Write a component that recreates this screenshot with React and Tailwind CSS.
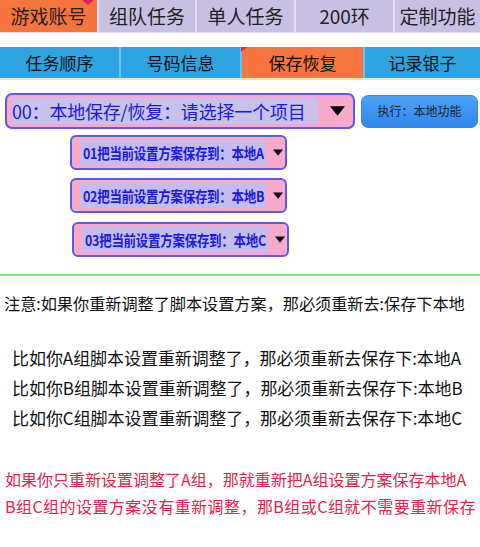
import React from "react";

const cjk = { fontFamily: '"Noto Sans CJK SC", "Noto Sans", sans-serif' };

function Tri({ className }) {
  return (
    <svg className={className} width="16" height="10" viewBox="0 0 16 10">
      <polygon points="0,0 16,0 8,10" fill="#000" />
    </svg>
  );
}

function SmallSelect({ label, className = "" }) {
  return (
    <div className={"h-[35px] w-[217px] rounded-[6px] border-2 border-[#5a5ae6] bg-[#f9a9c9] flex items-center pl-[8px] pr-[2px] " + className}>
      <div className="shrink-0 h-[25px] w-[186px] bg-[#c4bcec] flex items-center pl-[3px]">
        <span className="block origin-left scale-x-[0.86] text-[14.5px] font-semibold text-[#1a1ae0] tracking-[-0.3px] whitespace-nowrap">{label}</span>
      </div>
      <Tri className="ml-auto shrink-0 w-[10px] h-[9px]" />
    </div>
  );
}

export default function App() {
  const top = ["游戏账号", "组队任务", "单人任务", "200环", "定制功能"];
  const second = ["任务顺序", "号码信息", "保存恢复", "记录银子"];
  return (
    <div className="w-[480px] h-[547px] bg-white overflow-hidden relative" style={cjk}>
      {/* top tabs */}
      <div className="grid grid-cols-[97px_96px_97px_97px_1fr] gap-x-[2px] bg-[#e4def2] h-[33px] pb-[1px]">
        {top.map((t, i) => (
          <div
            key={t}
            className={
              "flex items-center justify-center text-[19px] text-[#222] " +
              (i === 0 ? "bg-[#f8743f]" : "bg-[#c8c0e2]")
            }
          >
            {t}
          </div>
        ))}
      </div>
      <div className="absolute left-[82px] top-0 w-0 h-0 border-l-[6px] border-l-transparent border-r-[6px] border-r-transparent border-t-[5px] border-t-[#e0245e]" />

      {/* second tabs */}
      <div className="mt-[14px] grid grid-cols-[119px_119px_121px_1fr] gap-x-[2px] bg-[#66c6f2] h-[33px] border-b-2 border-[#e6e6bc]">
        {second.map((t, i) => (
          <div
            key={t}
            className={
              "flex items-center justify-center text-[17px] text-[#111] " +
              (i === 2 ? "bg-[#f8743f]" : "bg-[#2fa2e0]")
            }
          >
            {t}
          </div>
        ))}
      </div>
      <div className="absolute left-[241px] top-[47px] w-0 h-0 border-r-[6px] border-r-transparent border-t-[5px] border-t-[#e0245e]" />

      {/* main select + button */}
      <div className="mt-[13px] flex items-center pl-[5px]">
        <div className="h-[36px] w-[350px] rounded-[7px] border-2 border-[#5a5ae6] bg-[#f9a9c9] flex items-center pl-[5px] pr-[6px]">
          <div className="shrink-0 h-[26px] w-[306px] bg-[#c9c1e9] flex items-center">
            <span className="text-[18px] text-[#1a1ae0] whitespace-nowrap tracking-[-0.2px]">00：本地保存/恢复：请选择一个项目</span>
          </div>
          <Tri className="ml-auto mr-[2px] w-[15px] h-[10px]" />
        </div>
        <div className="ml-[6px] h-[33px] w-[117px] rounded-[7px] bg-gradient-to-b from-[#4aa2f8] to-[#2f86ec] border border-[#3a86e0] flex items-center justify-center">
          <span className="text-[12px] text-[#222]">执行：本地功能</span>
        </div>
      </div>

      {/* small selects */}
      <div className="flex flex-col pl-[70px] mt-[6px]">
        <SmallSelect label="01把当前设置方案保存到：本地A" />
        <SmallSelect label="02把当前设置方案保存到：本地B" className="mt-[8px]" />
        <SmallSelect label="03把当前设置方案保存到：本地C" className="mt-[9px] ml-[2px] w-[215px]" />
      </div>

      {/* divider */}
      <div className="mt-[17px] h-[2px] bg-[#72f072]" />

      {/* notes */}
      <div className="mt-[16px] pl-[4px] text-[16.2px] text-[#111] leading-[22px] whitespace-nowrap tracking-[-0.05px]">
        注意:如果你重新调整了脚本设置方案，那必须重新去:保存下本地
      </div>

      <div className="mt-[33px] pl-[12px] flex flex-col gap-y-[8px] text-[17px] text-[#111] leading-[22px] whitespace-nowrap tracking-[-0.05px]">
        <div>比如你A组脚本设置重新调整了，那必须重新去保存下:本地A</div>
        <div>比如你B组脚本设置重新调整了，那必须重新去保存下:本地B</div>
        <div>比如你C组脚本设置重新调整了，那必须重新去保存下:本地C</div>
      </div>

      <div className="mt-[39px] pl-[5px] flex flex-col gap-y-[5px] text-[16px] text-[#e8204a] leading-[22px] whitespace-nowrap">
        <div>如果你只重新设置调整了A组，那就重新把A组设置方案保存本地A</div>
        <div className="pl-[0px] tracking-[0.45px]">B组C组的设置方案没有重新调整，那B组或C组就不需要重新保存</div>
      </div>
    </div>
  );
}
